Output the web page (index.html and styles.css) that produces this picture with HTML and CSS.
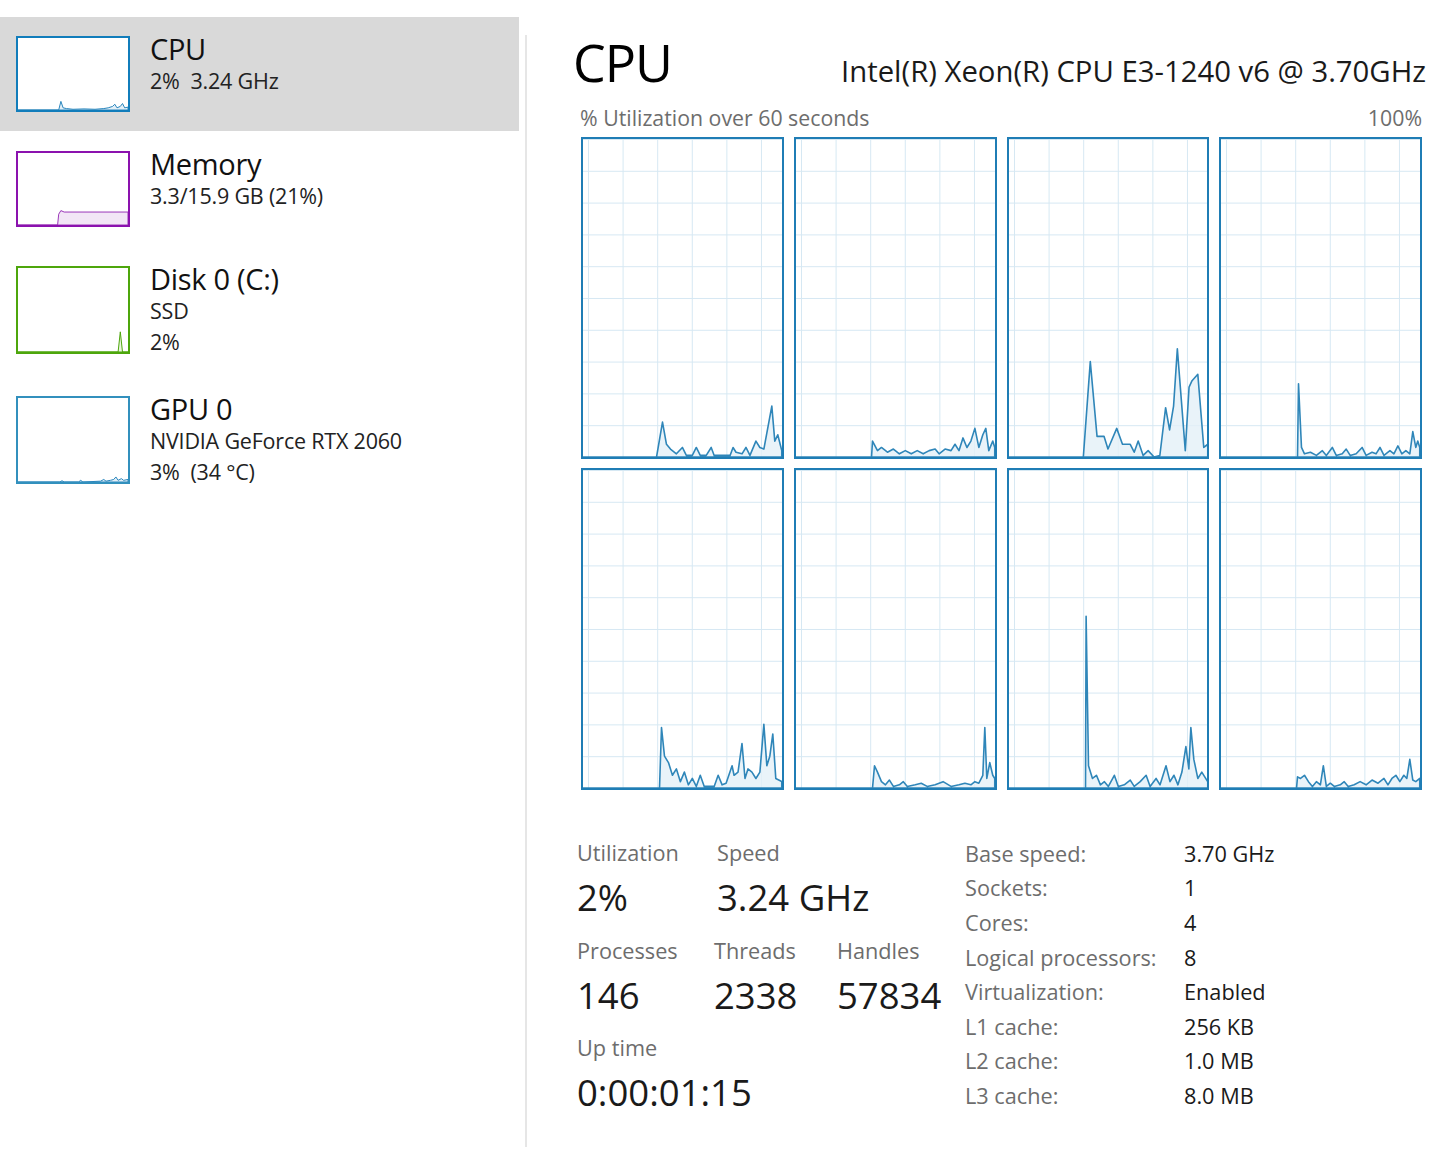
FILE: index.html
```html
<!DOCTYPE html>
<html lang="en">
<head>
  <meta charset="UTF-8">
  <title>Task Manager - Performance</title>
  <link rel="stylesheet" href="styles.css">
</head>
<body>

  <!-- left list of devices -->
  <div class="sidebar">
    <div class="item selected">
      <div class="thumb cpu">
        <svg viewBox="0 0 100 100" preserveAspectRatio="none"><polygon points="0,100 37,100 39,88 41,97 44,98 50,99 60,98.5 70,99 78,98 82,97 86,95 88,92 90,97 93,95 95,91 97,97 100,96 100,100"/></svg>
      </div>
      <div class="info">
        <div class="name">CPU</div>
        <div class="sub">2%&nbsp; 3.24 GHz</div>
      </div>
    </div>

    <div class="item">
      <div class="thumb mem">
        <svg viewBox="0 0 100 100" preserveAspectRatio="none"><polygon points="0,100 36,100 37,85 39,80 42,82 100,82 100,100"/></svg>
      </div>
      <div class="info">
        <div class="name">Memory</div>
        <div class="sub">3.3/15.9 GB (21%)</div>
      </div>
    </div>

    <div class="item">
      <div class="thumb disk tall">
        <svg viewBox="0 0 100 100" preserveAspectRatio="none"><polygon points="0,100 91,100 93,76 95,100 100,100"/></svg>
      </div>
      <div class="info">
        <div class="name">Disk 0 (C:)</div>
        <div class="sub">SSD</div>
        <div class="sub">2%</div>
      </div>
    </div>

    <div class="item">
      <div class="thumb gpu tall">
        <svg viewBox="0 0 100 100" preserveAspectRatio="none"><polygon points="0,100 38,100 40,98.5 42,100 55,100 57,98 59,100 75,99 78,97 80,99 84,98 87,97 89,94 91,98 94,96 96,98 100,97 100,100"/></svg>
      </div>
      <div class="info">
        <div class="name">GPU 0</div>
        <div class="sub">NVIDIA GeForce RTX 2060</div>
        <div class="sub">3%&nbsp; (34 °C)</div>
      </div>
    </div>
  </div>

  <div class="divider"></div>

  <!-- detail pane -->
  <div class="main">
    <div class="header">
      <div class="title">CPU</div>
      <div class="model">Intel(R) Xeon(R) CPU E3-1240 v6 @ 3.70GHz</div>
    </div>

    <div class="graph-caption">
      <span>% Utilization over 60 seconds</span>
      <span>100%</span>
    </div>

    <div class="graphs">
      <div class="cell"><svg viewBox="0 0 100 100" preserveAspectRatio="none"><polygon points="0,100 37,100 40,89 42,96 44,97.5 47,99 50,97 52,99.5 55,99.5 57,97 59,99.5 62,99.5 64.5,97 66,99.5 74,99.5 75.5,97 77,98.5 80,99 82,97 84,99.5 87,95 89,97 91,97.5 95,84 96.5,95 98,93 100,98 100,100"/></svg></div>
      <div class="cell"><svg viewBox="0 0 100 100" preserveAspectRatio="none"><polygon points="0,100 38,100 38.5,95 41,98 43,97 46,98.5 49,97.5 52,99 55,98 58,99 61,98 64,99 67,98 70,97.5 72,99 75,97.5 78,98 80,96 82,98 84,94 86,97 88,95 90,91 92,97 94,93 95.5,91 97,98 99,95 100,97 100,100"/></svg></div>
      <div class="cell"><svg viewBox="0 0 100 100" preserveAspectRatio="none"><polygon points="0,100 37.4,100 40.9,70 44.3,93.5 47.8,93.5 49.8,97.5 54.2,91 57.1,96 61,96 63,98.5 65,95 67.5,99.5 70,98 73,100 75.9,99.5 78.8,84.5 80.8,91.5 82.8,84 84.7,66 88.7,98 90.6,78 92.1,76 95,74 98,97 100,96 100,100"/></svg></div>
      <div class="cell"><svg viewBox="0 0 100 100" preserveAspectRatio="none"><polygon points="0,100 38.5,100 39,77 40.5,97 42,99 45,98.5 48,99.5 51,98 53,99.5 56,97 58,99.5 61,99 63,97.5 65,99.5 68,99 71,97 73,99.5 76,98.5 78,99 80,97 82,99.5 85,98 87,99 89,96.5 91,99 93,98 95,99 96.5,92 98,97 99,95 100,97 100,100"/></svg></div>
      <div class="cell"><svg viewBox="0 0 100 100" preserveAspectRatio="none"><polygon points="0,100 38.5,100 39.5,81 41,90 43,92 45,96 47,94 49,98 51,95 53,99 55,97 57,99.5 59,96 61,99.5 66,99.5 68,96 70,99 72,98.5 75,93 76,96 78,95 80,86 81.5,97 83,94 85,95 87,97 89,95 91,80 92.5,93 94,90 95.5,83 97,97 100,98 100,100"/></svg></div>
      <div class="cell"><svg viewBox="0 0 100 100" preserveAspectRatio="none"><polygon points="0,100 38.5,100 39.5,93 41,95 43,98 45,99 47,97.5 49,99.5 52,99 54,98 56,99.5 60,99 63,98.5 66,99.5 70,99 74,98 78,99.5 82,99 85,98.5 88,99 90,98 92,98.5 94,96 95,81 96,97 97.5,92 99,96 100,97 100,100"/></svg></div>
      <div class="cell"><svg viewBox="0 0 100 100" preserveAspectRatio="none"><polygon points="0,100 38.5,100 38.8,46 40,93 42,97 44,96 46,99 48,98 50,99.5 53,96 55,99.5 58,99 61,97.5 63,99.5 66,98 69,96 71,99.5 74,97 76,99 79,93 81,98 83,96 85,99 87,95 89,87 90.5,94 91.5,81 93,91 95,97 97,95 100,98 100,100"/></svg></div>
      <div class="cell"><svg viewBox="0 0 100 100" preserveAspectRatio="none"><polygon points="0,100 38,100 38.5,96.5 40,97 42,96 44,98 46,99.5 48,98 50,99 51.5,93 53,99.5 55,98.5 57,99.5 60,99 62,98 64,99.5 67,99 70,98 73,99 76,97.5 79,98.5 82,97 84,99 86,97 88,96 90,98 92,96 93.5,97 95,91 96.5,97.5 98,98 100,97 100,100"/></svg></div>
    </div>

    <div class="stats">
      <div class="live">
        <div class="row">
          <div class="stat w-util"><div class="label">Utilization</div><div class="value">2%</div></div>
          <div class="stat"><div class="label">Speed</div><div class="value">3.24 GHz</div></div>
        </div>
        <div class="row">
          <div class="stat w-proc"><div class="label">Processes</div><div class="value">146</div></div>
          <div class="stat w-thr"><div class="label">Threads</div><div class="value">2338</div></div>
          <div class="stat"><div class="label">Handles</div><div class="value">57834</div></div>
        </div>
        <div class="row">
          <div class="stat"><div class="label">Up time</div><div class="value">0:00:01:15</div></div>
        </div>
      </div>

      <div class="specs">
        <span class="key">Base speed:</span><span>3.70 GHz</span>
        <span class="key">Sockets:</span><span>1</span>
        <span class="key">Cores:</span><span>4</span>
        <span class="key">Logical processors:</span><span>8</span>
        <span class="key">Virtualization:</span><span>Enabled</span>
        <span class="key">L1 cache:</span><span>256 KB</span>
        <span class="key">L2 cache:</span><span>1.0 MB</span>
        <span class="key">L3 cache:</span><span>8.0 MB</span>
      </div>
    </div>
  </div>

</body>
</html>
```

FILE: styles.css
```css
body {
  font-family: 'Open Sans', 'Noto Sans', sans-serif;
  background: #fff;
  color: #1a1a1a;
  margin: 0;
  padding: 0;
  display: flex;
  width: 1440px;
  height: 1160px;
  overflow: hidden;
}

/* ---- sidebar ---- */
.sidebar {
  width: 519px;
  padding-top: 17px;
  flex-shrink: 0;
}

.item {
  display: flex;
  align-items: flex-start;
  padding: 19px 16px;
  gap: 20px;
}

.item + .item {
  margin-top: 1px;
}

.item.selected {
  background: #d9d9d9;
}

.thumb {
  box-sizing: border-box;
  width: 114px;
  height: 76px;
  border: 2px solid #117dbb;
  background: #fff;
  flex-shrink: 0;
}

.thumb.tall {
  height: 88px;
}

.thumb svg {
  display: block;
  width: 100%;
  height: 100%;
}

.thumb polygon {
  stroke-width: 1;
  vector-effect: non-scaling-stroke;
}

.thumb.cpu polygon, .thumb.gpu polygon {
  fill: #e3eff7;
  stroke: #2a86bd;
}
.thumb.mem { border-color: #8b12ae; }
.thumb.mem polygon { fill: #f2e6f6; stroke: #9b37b9; }
.thumb.disk { border-color: #4da60c; }
.thumb.disk polygon { fill: #eaf5e0; stroke: #4da60c; }
.thumb.gpu { border-color: #3290bd; }

.info {
  margin-top: -4px;
}

.name {
  font-size: 29px;
  line-height: 33px;
  color: #111;
  letter-spacing: -0.3px;
}

.sub {
  font-size: 21.5px;
  line-height: 31px;
  color: #222;
  letter-spacing: -0.2px;
}

.divider {
  width: 2px;
  margin: 35px 0 13px 6px;
  background: #e6e6e6;
  flex-shrink: 0;
}

/* ---- detail pane ---- */
.main {
  flex: 1;
  padding: 30px 14px 0 46px;
}

.header {
  display: flex;
  justify-content: space-between;
  align-items: baseline;
}

.title {
  font-size: 52px;
  line-height: 64px;
  color: #000;
  letter-spacing: -1px;
}

.model {
  font-size: 29.3px;
  color: #1a1a1a;
}

.graph-caption {
  display: flex;
  justify-content: space-between;
  font-size: 21.3px;
  color: #6d6d6d;
  margin: 10px 4px 5px 7px;
  line-height: 28px;
}

.graphs {
  display: grid;
  grid-template-columns: repeat(4, 1fr);
  grid-template-rows: 322px 322px;
  gap: 9px 10px;
  margin: 0 4px 0 8px;
}

.cell {
  border: 2px solid #1f7db5;
  background-color: #fff;
  background-image:
    linear-gradient(to right, #d6e8f3 1px, transparent 1px),
    linear-gradient(to bottom, #d6e8f3 1px, transparent 1px);
  background-size: 34.6px 100%, 100% 10%;
  background-position: 5px 0, 0 0;
}

.cell svg {
  display: block;
  width: 100%;
  height: 100%;
}

.cell polygon {
  fill: #e4f0f8;
  fill-opacity: 0.8;
  stroke: #2f86b9;
  stroke-width: 1.6;
  stroke-linejoin: round;
  vector-effect: non-scaling-stroke;
}

/* ---- numbers under graphs ---- */
.stats {
  display: flex;
  margin-top: 50px;
  padding-left: 4px;
}

.live {
  width: 388px;
}

.row {
  display: flex;
  margin-bottom: 16.5px;
}

.stat.w-util { width: 140px; }
.stat.w-proc { width: 137px; }
.stat.w-thr { width: 123px; }

.label {
  font-size: 21.7px;
  line-height: 26px;
  color: #6d6d6d;
}

.value {
  font-size: 36.5px;
  line-height: 48px;
  color: #1a1a1a;
  margin-top: 7px;
}

.specs {
  display: grid;
  grid-template-columns: 219px auto;
  grid-auto-rows: 34.6px;
  align-items: center;
  font-size: 21.7px;
  margin-top: -4px;
}

.specs .key {
  color: #6d6d6d;
}
```
